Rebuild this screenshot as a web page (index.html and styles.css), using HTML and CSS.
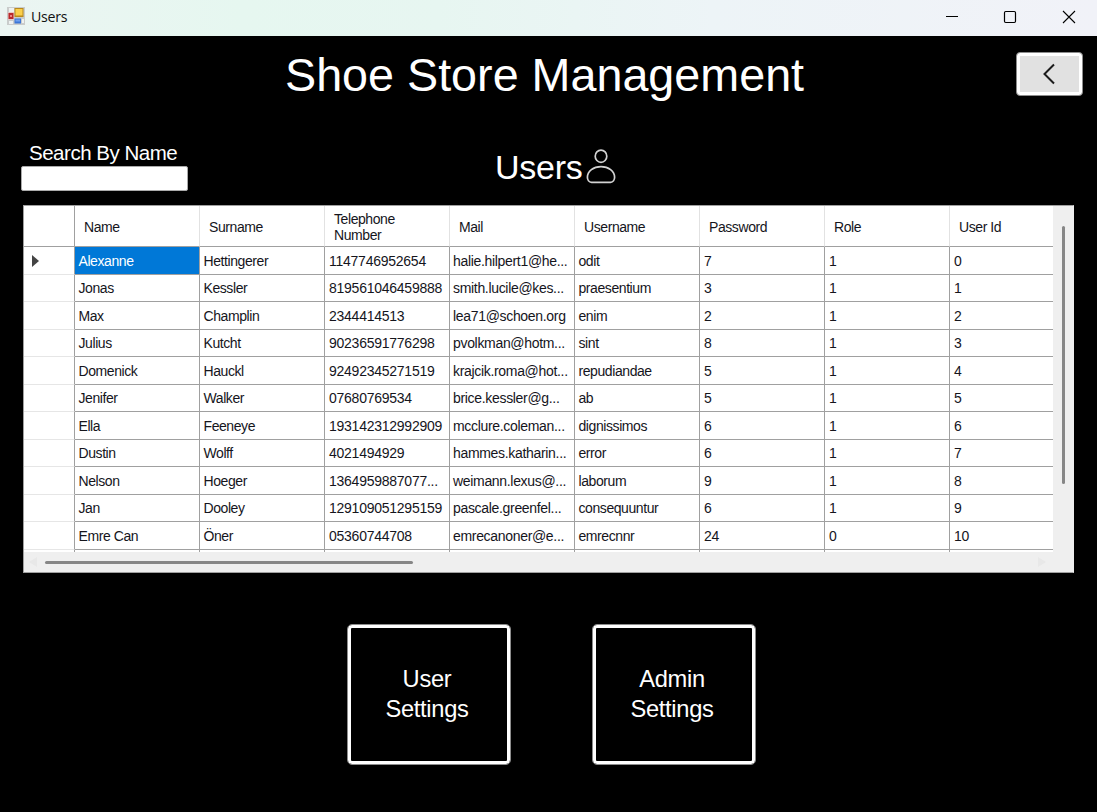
FILE: index.html
```
<!DOCTYPE html>
<html lang="en">
<head>
<meta charset="utf-8">
<title>Users</title>
<link rel="stylesheet" href="styles.css">
</head>
<body>
<div class="window">
  <header class="titlebar">
    <svg class="app-icon" width="18" height="18" viewBox="0 0 18 18">
      <rect width="18" height="18" fill="#c9cccb"/>
      <rect x="2" y="1" width="5" height="4" fill="#eef1f0"/>
      <rect x="1" y="5" width="6" height="8" fill="#e9c9c6"/>
      <rect x="1.5" y="6" width="5" height="6" fill="#b8292b"/><rect x="3" y="8" width="2" height="2" fill="#e88"/>
      <rect x="7.5" y="1" width="9" height="9" fill="#b98a1c"/><rect x="8.5" y="2" width="7" height="6.5" fill="#fbd04b"/>
      <rect x="7.5" y="11.5" width="6.5" height="5" fill="#3b76d8"/><rect x="8.5" y="12.5" width="4.5" height="2" fill="#6fa0ee"/>
      <rect x="2" y="14" width="4" height="3" fill="#eef1f0"/><rect x="15" y="12" width="2" height="4" fill="#eef1f0"/>
    </svg>
    <span class="caption">Users</span>
    <svg class="controls" width="177" height="36" viewBox="0 0 177 36" fill="none" stroke="#000">
      <path d="M26 16.5H38"/>
      <rect x="84.5" y="11.5" width="11" height="11" rx="1.2" stroke-width="1.2"/>
      <path d="M143 11L155 23M155 11L143 23" stroke-width="1.1"/>
    </svg>
  </header>
  <div class="heading">
    <h1>Shoe Store Management</h1>
    <button class="back" aria-label="Back">
      <svg width="14" height="22" viewBox="0 0 14 22" fill="none" stroke="#1c1c1c" stroke-width="2"><path d="M12 1.5L2.5 11L12 20.5"/></svg>
    </button>
  </div>
  <div class="tools">
    <label class="search"><span>Search By Name</span><input type="text"></label>
    <div class="section">
      <h2>Users</h2>
      <svg width="34" height="38" viewBox="0 0 34 38" fill="none" stroke="#d2d2d2" stroke-width="1.7">
        <ellipse cx="18" cy="9.2" rx="5.8" ry="6.1"/>
        <path d="M8.5 35.3H27.5C30 35.3 31.6 33 31.6 30.3C31.6 24 25.5 19.6 18 19.6S4.4 24 4.4 30.3C4.4 33 6 35.3 8.5 35.3Z"/>
      </svg>
    </div>
  </div>
  <div class="datagrid">
    <div class="view">
      <div class="row head"><span></span><span>Name</span><span>Surname</span><span>Telephone<br>Number</span><span>Mail</span><span>Username</span><span>Password</span><span>Role</span><span>User Id</span></div>
      <div class="row"><span><i class="marker"></i></span><span class="selected">Alexanne</span><span>Hettingerer</span><span class="num">1147746952654</span><span class="mail">halie.hilpert1@he...</span><span>odit</span><span class="num">7</span><span class="num">1</span><span class="num">0</span></div>
      <div class="row"><span></span><span>Jonas</span><span>Kessler</span><span class="num">819561046459888</span><span class="mail">smith.lucile@kes...</span><span>praesentium</span><span class="num">3</span><span class="num">1</span><span class="num">1</span></div>
      <div class="row"><span></span><span>Max</span><span>Champlin</span><span class="num">2344414513</span><span class="mail">lea71@schoen.org</span><span>enim</span><span class="num">2</span><span class="num">1</span><span class="num">2</span></div>
      <div class="row"><span></span><span>Julius</span><span>Kutcht</span><span class="num">90236591776298</span><span class="mail">pvolkman@hotm...</span><span>sint</span><span class="num">8</span><span class="num">1</span><span class="num">3</span></div>
      <div class="row"><span></span><span>Domenick</span><span>Hauckl</span><span class="num">92492345271519</span><span class="mail">krajcik.roma@hot...</span><span>repudiandae</span><span class="num">5</span><span class="num">1</span><span class="num">4</span></div>
      <div class="row"><span></span><span>Jenifer</span><span>Walker</span><span class="num">07680769534</span><span class="mail">brice.kessler@g...</span><span>ab</span><span class="num">5</span><span class="num">1</span><span class="num">5</span></div>
      <div class="row"><span></span><span>Ella</span><span>Feeneye</span><span class="num">193142312992909</span><span class="mail">mcclure.coleman...</span><span>dignissimos</span><span class="num">6</span><span class="num">1</span><span class="num">6</span></div>
      <div class="row"><span></span><span>Dustin</span><span>Wolff</span><span class="num">4021494929</span><span class="mail">hammes.katharin...</span><span>error</span><span class="num">6</span><span class="num">1</span><span class="num">7</span></div>
      <div class="row"><span></span><span>Nelson</span><span>Hoeger</span><span class="num">1364959887077...</span><span class="mail">weimann.lexus@...</span><span>laborum</span><span class="num">9</span><span class="num">1</span><span class="num">8</span></div>
      <div class="row"><span></span><span>Jan</span><span>Dooley</span><span class="num">129109051295159</span><span class="mail">pascale.greenfel...</span><span>consequuntur</span><span class="num">6</span><span class="num">1</span><span class="num">9</span></div>
      <div class="row"><span></span><span>Emre Can</span><span>Öner</span><span class="num">05360744708</span><span class="mail">emrecanoner@e...</span><span>emrecnnr</span><span class="num">24</span><span class="num">0</span><span class="num">10</span></div>
      <div class="row"><span></span><span></span><span></span><span></span><span></span><span></span><span></span><span></span><span></span></div>
    </div>
    <div class="vscroll"><div class="vthumb"></div></div>
    <div class="hscroll"><i class="arrow left"></i><div class="hthumb"></div><i class="arrow right"></i></div>
  </div>
  <div class="actions">
    <button class="tile">User<br>Settings</button>
    <button class="tile">Admin<br>Settings</button>
  </div>
</div>
</body>
</html>
```
FILE: styles.css
```
* { box-sizing: border-box; }
body { margin: 0; background: #000; font-family: "Liberation Sans", Arial, sans-serif; }
.window { width: 1097px; height: 812px; overflow: hidden; background: #000; color: #fff; }
.titlebar { height: 36px; display: flex; align-items: center; padding-left: 7px; color: #111;
  background: linear-gradient(90deg, #ebf5f2 0, #e6f7f0 22%, #e7f6f1 40%, #edf4f7 65%, #f1f2f8 100%); }
.app-icon { margin-top: -4px; }
.caption { margin: -3px 0 0 6px; font: 14.2px "Open Sans", "Noto Sans", sans-serif; letter-spacing: -.3px; }
.controls { margin-left: auto; }
.heading { position: relative; height: 104px; padding-top: 12px; }
h1 { margin: 0 0 0 285px; font-size: 46.7px; line-height: 54px; font-weight: 400; white-space: nowrap; }
.back { position: absolute; right: 14px; top: 16px; width: 67px; height: 44px; padding: 0;
  border: 1px solid #8c8c8c; border-radius: 4px; background: #e1e1e1; box-shadow: inset 0 0 0 3px #fff;
  display: flex; align-items: center; justify-content: center; }
.back svg { margin-right: 1px; }
.tools { display: flex; height: 65px; padding-left: 21px; }
.search { width: 167px; display: flex; flex-direction: column; }
.search span { padding-left: 8px; font-size: 20.5px; line-height: 26px; letter-spacing: -.48px; white-space: nowrap; }
.search input { height: 25px; border: 1px solid #aaa; border-radius: 2px; background: #fff; }
.section { display: flex; margin-left: 307px; padding-top: 7px; }
h2 { width: 88px; margin: 0; font-size: 34px; line-height: 40px; font-weight: 400; letter-spacing: -.25px; }
.datagrid { width: 1051px; height: 368px; margin-left: 23px; border: 1px solid #a0a0a0; border-right-color: #efefef;
  display: grid; grid-template: 346px 20px / 1029px 20px; background: #efefef; color: #15151c; }
.view { overflow: hidden; background: #fff; }
.row { display: grid; grid-template-columns: 51px repeat(8, 125px); height: 27.5px; }
.row span { border-right: 1px solid #a0a0a0; border-bottom: 1px solid #a0a0a0; padding: 1px 0 0 3.5px; display: flex;
  align-items: center; white-space: nowrap; font-size: 14px; letter-spacing: -.42px; }
.row span:first-child { border-bottom-color: #e6e6e6; }
.row .num { padding-left: 4px; letter-spacing: -.25px; }
.row .mail { padding-left: 3px; letter-spacing: -.32px; }
.row .selected { background: #0078d7; color: #fff; }
.head { height: 41px; }
.row.head span { border-right-color: #e2e2e2; border-bottom-color: #a0a0a0; padding: 1px 0 0 9px; line-height: 16px; }
.row.head span:first-child { border-right-color: #a0a0a0; }
.marker { margin-left: 4px; border: 6px solid transparent; border-left: 7px solid #444; border-right: 0; }
.vthumb { width: 3px; height: 258px; margin: 20px 0 0 9px; border-radius: 2px; background: #868686; }
.hscroll { grid-column: 1 / 3; display: flex; align-items: center; padding: 0 27px 0 5px; }
.hthumb { width: 368px; height: 3px; margin-left: 8px; border-radius: 2px; background: #868686; }
.arrow { border: 5px solid transparent; }
.left { border-left: 0; border-right: 8px solid #e8e8e8; }
.right { margin-left: auto; border-right: 0; border-left: 8px solid #e8e8e8; }
.actions { display: flex; gap: 81px; padding: 51px 0 0 347px; }
.tile { width: 164px; height: 141px; padding: 0 4px 2px 0; border: 1px solid #8c8c8c; border-radius: 5px; background: #000;
  box-shadow: inset 0 0 0 3px #fff; color: #fff; font: 23.7px/30px "Liberation Sans", Arial, sans-serif; letter-spacing: -.3px; }
```
